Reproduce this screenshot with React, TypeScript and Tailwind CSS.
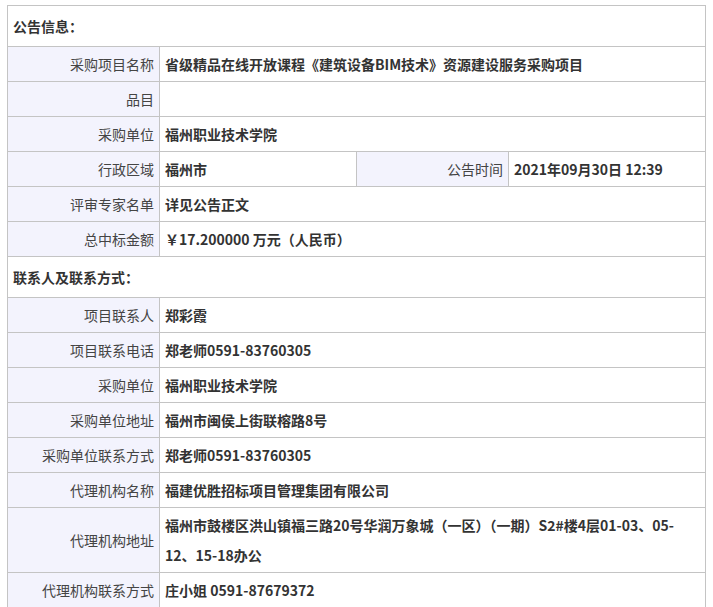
const info: [string, string][] = [
  ["采购项目名称", "省级精品在线开放课程《建筑设备BIM技术》资源建设服务采购项目"],
  ["品目", ""],
  ["采购单位", "福州职业技术学院"],
];
const info2: [string, string][] = [
  ["评审专家名单", "详见公告正文"],
  ["总中标金额", "￥17.200000 万元（人民币）"],
];
const contact: [string, string][] = [
  ["项目联系人", "郑彩霞"],
  ["项目联系电话", "郑老师0591-83760305"],
  ["采购单位", "福州职业技术学院"],
  ["采购单位地址", "福州市闽侯上街联榕路8号"],
  ["采购单位联系方式", "郑老师0591-83760305"],
  ["代理机构名称", "福建优胜招标项目管理集团有限公司"],
  ["代理机构地址", "福州市鼓楼区洪山镇福三路20号华润万象城（一区）（一期）S2#楼4层01-03、05-12、15-18办公"],
  ["代理机构联系方式", "庄小姐 0591-87679372"],
];

const td = "border border-[#c4c4c4] px-[5px]";
const lab = `${td} bg-[#f3f3fd] text-right text-[#444] w-[152px] h-[35px] whitespace-nowrap`;
const val = `${td} font-bold text-[#333] leading-[30px] py-[2px]`;

function Row({ k, v }: { k: string; v: string }) {
  return (
    <tr>
      <td className={lab}>{k}</td>
      <td className={val} colSpan={3}>{v}</td>
    </tr>
  );
}

export default function App() {
  return (
    <div className="bg-white w-[713px] h-[607px] pt-[5px] pl-[7px]" style={{ fontFamily: '"Noto Sans CJK SC", "Noto Sans", sans-serif' }}>
      <table className="border-collapse w-[699px] text-[14px] table-fixed">
        <colgroup>
          <col className="w-[152px]" />
          <col className="w-[197px]" />
          <col className="w-[152px]" />
          <col />
        </colgroup>
        <tbody>
          <tr>
            <td colSpan={4} className={`${td} h-[41px] font-bold text-[#333]`}>公告信息：</td>
          </tr>
          {info.map(([k, v]) => <Row key={k} k={k} v={v} />)}
          <tr>
            <td className={lab}>行政区域</td>
            <td className={val}>福州市</td>
            <td className={lab}>公告时间</td>
            <td className={val}>2021年09月30日 12:39</td>
          </tr>
          {info2.map(([k, v]) => <Row key={k} k={k} v={v} />)}
          <tr>
            <td colSpan={4} className={`${td} h-[41px] font-bold text-[#333]`}>联系人及联系方式：</td>
          </tr>
          {contact.map(([k, v], i) => <Row key={i} k={k} v={v} />)}
        </tbody>
      </table>
    </div>
  );
}
